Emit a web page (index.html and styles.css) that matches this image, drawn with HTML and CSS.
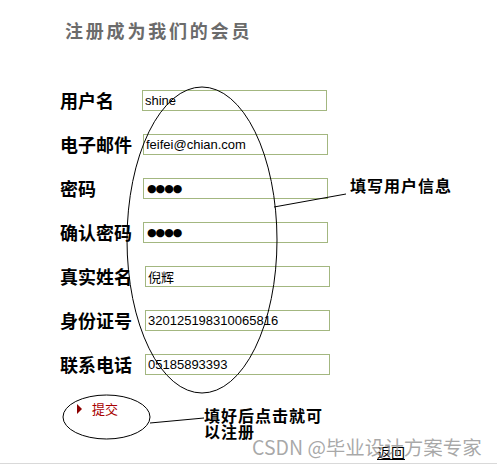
FILE: index.html
```html
<!DOCTYPE html>
<html lang="zh-CN">
<head>
<meta charset="utf-8">
<title>注册成为我们的会员</title>
<link rel="stylesheet" href="styles.css">
</head>
<body>
<div class="page">
  <h1 class="title">注册成为我们的会员</h1>
  <form class="form">
    <div class="row"><span class="label">用户名</span><input class="field" type="text" value="shine"></div>
    <div class="row"><span class="label">电子邮件</span><input class="field field--s1" type="text" value="feifei@chian.com"></div>
    <div class="row"><span class="label">密码</span><input class="field field--s1 field--pw" type="text" value="●●●●"></div>
    <div class="row"><span class="label">确认密码</span><input class="field field--s1 field--pw" type="text" value="●●●●"></div>
    <div class="row"><span class="label">真实姓名</span><input class="field field--s3" type="text" value="倪辉"></div>
    <div class="row"><span class="label">身份证号</span><input class="field field--s3" type="text" value="320125198310065816"></div>
    <div class="row"><span class="label">联系电话</span><input class="field field--s3" type="text" value="05185893393"></div>
    <div class="submit"><span class="arrow"></span><span class="submit-text">提交</span></div>
    <div class="back-row"><a class="back" href="#">返回</a></div>
  </form>

  <svg class="marks" width="497" height="467" viewBox="0 0 497 467">
    <ellipse cx="202" cy="240" rx="75" ry="153" fill="none" stroke="#000" stroke-width="1"/>
    <line x1="274" y1="207" x2="346" y2="194" stroke="#000" stroke-width="1"/>
    <ellipse cx="106.5" cy="417" rx="43.5" ry="22" fill="none" stroke="#000" stroke-width="1"/>
    <line x1="150" y1="423" x2="204" y2="418" stroke="#000" stroke-width="1"/>
  </svg>
  <div class="note note--info">填写用户信息</div>
  <div class="note note--submit">填好后点击就可<br>以注册</div>
  <div class="watermark">CSDN @毕业设计方案专家</div>
</div>
</body>
</html>
```

FILE: styles.css
```css
html, body {
  margin: 0;
  padding: 0;
  background: #fff;
}

body {
  font-family: "Noto Sans CJK SC", "Liberation Sans", sans-serif;
  color: #000;
}

.page {
  position: relative;
  height: 442px;
  border-bottom: 1px solid #d9d9d9;
  padding-top: 21px;
  box-sizing: content-box;
  overflow: hidden;
}

.title {
  margin: 0 0 0 65px;
  font-size: 18px;
  line-height: 18px;
  font-weight: bold;
  color: #6b6b6b;
  letter-spacing: 2.8px;
}

.form {
  margin: 51px 0 0 0;
  display: flex;
  flex-direction: column;
}

.row {
  display: flex;
  align-items: center;
  height: 21px;
  margin-bottom: 23px;
  margin-left: 60px;
}

.label {
  width: 82px;
  flex: none;
  font-size: 18px;
  line-height: 21px;
  font-weight: bold;
  white-space: nowrap;
}

.field {
  width: 185px;
  height: 21px;
  box-sizing: border-box;
  border: 1px solid #a3b780;
  padding: 0 2px;
  margin: 0;
  font-family: "Liberation Sans", "Noto Sans CJK SC", sans-serif;
  font-size: 13px;
  color: #000;
  background: #fff;
  outline: none;
}

.field--s1 { margin-left: 1px; }
.field--s3 { margin-left: 3px; }

.field--pw {
  font-family: "DejaVu Sans", sans-serif;
  font-size: 11px;
  letter-spacing: -1px;
  padding-left: 3px;
}

.submit {
  display: flex;
  align-items: center;
  margin: 5px 0 0 77px;
  height: 11px;
}

.arrow {
  width: 0;
  height: 0;
  border-left: 5px solid #8c0000;
  border-top: 5px solid transparent;
  border-bottom: 5px solid transparent;
}

.submit-text {
  margin-left: 10px;
  font-size: 13px;
  line-height: 11px;
  color: #a80000;
}

.back-row {
  margin: 25px 0 0 377px;
}

.back {
  font-size: 14px;
  line-height: 16px;
  color: #000;
  text-decoration: underline;
}

.marks {
  position: absolute;
  left: 0;
  top: 0;
  pointer-events: none;
}

.note {
  position: absolute;
  font-size: 16px;
  font-weight: bold;
  letter-spacing: 1px;
  color: #000;
}

.note--info {
  left: 350px;
  top: 175px;
  line-height: 20px;
}

.note--submit {
  left: 204px;
  top: 407px;
  line-height: 16px;
}

.watermark {
  position: absolute;
  left: 252px;
  top: 436px;
  font-size: 19.5px;
  line-height: 22px;
  color: rgba(140, 140, 140, 0.75);
  white-space: nowrap;
  pointer-events: none;
}
```
